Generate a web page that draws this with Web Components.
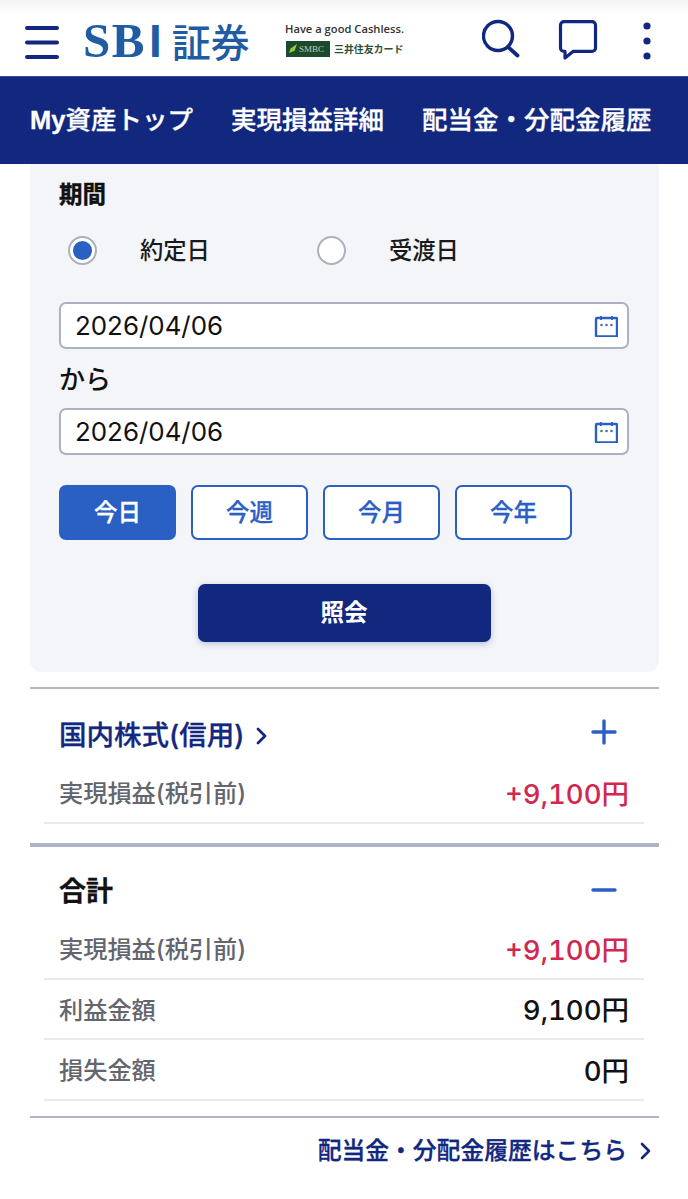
<!DOCTYPE html>
<html lang="ja">
<head>
<meta charset="utf-8">
<title>SBI証券</title>
<style>
  html, body { margin: 0; background: #fff; }
  body { font-family: Inter, "Noto Sans CJK JP", sans-serif; color: #111; }
  main { display: block; padding: 0 29px 0 30px; }
</style>
</head>
<body>
<app-header></app-header>
<app-tabs>
  <a><b>My</b>資産トップ</a>
  <a>実現損益詳細</a>
  <a>配当金・分配金履歴</a>
</app-tabs>
<main>
  <period-panel></period-panel>
  <pl-section heading="国内株式(信用)" link toggle="plus" style="border-top:2px solid #b3b6c0">
    <pl-row label="実現損益(税引前)" value="+9,100円" tone="up"></pl-row>
  </pl-section>
  <pl-section heading="合計" toggle="minus" style="border-top:4px solid #aeb4c4;margin-top:19px;padding-bottom:15px;border-bottom:2px solid #b3b6c0">
    <pl-row label="実現損益(税引前)" value="+9,100円" tone="up"></pl-row>
    <pl-row label="利益金額" value="9,100円"></pl-row>
    <pl-row label="損失金額" value="0円"></pl-row>
  </pl-section>
  <more-link>配当金・分配金履歴はこちら</more-link>
</main>

<script>
const FONT = 'Inter, "Noto Sans CJK JP", sans-serif';
const NAVY = "#12287f";
const BLUE = "#2a5fc4";

class AppHeader extends HTMLElement {
  constructor() {
    super();
    this.attachShadow({ mode: "open" });
    this.shadowRoot.innerHTML = `
      <style>
        :host { display: flex; align-items: center; height: 76px; box-sizing: border-box; padding-left: 25px; background: linear-gradient(#f4f4f5 0, #fff 14px); font-family: ${FONT}; }
        svg { display: block; flex: none; }
        .logo { margin-left: 24px; width: 176px; flex: none; display: flex; align-items: baseline; color: #1f5ca3; font: 700 49px/1 "Liberation Serif", "Noto Sans CJK JP", serif; letter-spacing: 1.500px; margin-top: 4px; }
        .logo i { font: 700 46px/1 "Liberation Sans", sans-serif; margin-left: 3px; letter-spacing: 0; }
        .logo b { font: 500 39px/1 "Noto Sans CJK JP", sans-serif; letter-spacing: 0; margin-left: 10px; }
        .card { margin: 3px 0 0 27px; width: 118px; flex: none; display: grid; gap: 6px; }
        .tag { font: 600 11.200px/13px "Open Sans", sans-serif; color: #333; white-space: nowrap; margin-left: -1px; }
        .brand { display: flex; align-items: center; gap: 4px; white-space: nowrap; }
        .smbc { width: 44px; height: 16px; background: #1d4a2c; color: #b9cdb9; font: 9px/16px "Liberation Serif", serif; box-sizing: border-box; padding-left: 13px; position: relative; }
        .smbc::before { content: ""; position: absolute; left: 3px; top: 3px; width: 8px; height: 9px; background: #9acb3c; clip-path: polygon(100% 0, 70% 75%, 0 100%, 20% 50%); }
        .jp { font: 700 10px/16px "Noto Sans CJK JP", sans-serif; color: #2c5138; letter-spacing: -0.100px; }
        .icons { margin: 4px 0 0 78px; display: flex; align-items: center; }
      </style>
      <svg width="34" height="34" viewBox="0 0 34 34" fill="none" stroke="${NAVY}" stroke-width="4" stroke-linecap="round" style="margin-top:8px"><path d="M2 3h30M2 17.500h30M2 32h30"/></svg>
      <div class="logo">SB<i>I</i><b>証券</b></div>
      <div class="card">
        <div class="tag">Have a good Cashless.</div>
        <div class="brand"><span class="smbc">SMBC</span><span class="jp">三井住友カード</span></div>
      </div>
      <div class="icons">
        <svg width="176" height="50" viewBox="0 0 176 50" fill="none" stroke="${NAVY}">
          <circle cx="16" cy="21" r="14.500" stroke-width="3.400"/>
          <path d="M26 32l9.500 8.500" stroke-width="3.800" stroke-linecap="round"/>
          <path d="M82 6.600h28a3.500 3.500 0 0 1 3.500 3.500v22.800a3.500 3.500 0 0 1-3.500 3.500H91l-8 6.600v-6.600h-1a3.500 3.500 0 0 1-3.500-3.500V10.100a3.500 3.500 0 0 1 3.500-3.500z" stroke-width="3.200" stroke-linejoin="round"/>
          <g fill="${NAVY}" stroke="none"><circle cx="165" cy="11" r="3.600"/><circle cx="165" cy="26" r="3.600"/><circle cx="165" cy="41" r="3.600"/></g>
        </svg>
      </div>
    `;
  }
}

class AppTabs extends HTMLElement {
  constructor() {
    super();
    this.attachShadow({ mode: "open" });
    this.shadowRoot.innerHTML = `
      <style>
        :host { display: flex; position: relative; overflow: hidden; height: 88px; box-sizing: border-box; border-top: 1px solid #3a4f96; align-items: center; gap: 38px; padding-left: 30px; background: ${NAVY}; color: #fff; white-space: nowrap; font: 500 25.500px/1 "Liberation Sans", "Noto Sans CJK JP", sans-serif; -webkit-text-stroke: .3px #fff; }
        :host::after { content: ""; position: absolute; top: 0; bottom: 0; right: 0; width: 50px; background: linear-gradient(90deg, rgba(18,40,127,0), rgba(18,40,127,.45)); }
        ::slotted(a) { display: block; flex: none; }
      </style>
      <slot></slot>
    `;
  }
}

class DateField extends HTMLElement {
  constructor() {
    super();
    this.attachShadow({ mode: "open" });
    this.shadowRoot.innerHTML = `
      <style>
        :host { display: flex; align-items: center; justify-content: space-between; height: 47px; box-sizing: border-box; padding: 0 9px 0 14px; border: 2px solid #aab1bf; border-radius: 7px; background: #fff; font: 400 25.900px/1 ${FONT}; color: #111; }
        svg { display: block; }
      </style>
      <span><slot></slot></span>
      <svg width="24" height="22" viewBox="0 0 24 22" fill="none" stroke="${BLUE}">
        <rect x="2" y="3" width="21" height="18.500" rx="1" stroke-width="2.400"/>
        <path d="M7 1v4M18 1v4" stroke-width="1.800"/>
        <g fill="#4a6fb5" stroke="none"><circle cx="7.500" cy="10" r="1.300"/><circle cx="12.500" cy="10" r="1.300"/><circle cx="17.500" cy="10" r="1.300"/></g>
      </svg>
    `;
  }
}

class RangeButton extends HTMLElement {
  constructor() {
    super();
    this.attachShadow({ mode: "open" });
    this.shadowRoot.innerHTML = `
      <style>
        :host { display: flex; align-items: center; justify-content: center; width: 117px; height: 55px; box-sizing: border-box; border: 2px solid ${BLUE}; border-radius: 7px; background: #fff; color: ${BLUE}; font: 500 23.500px/1 ${FONT}; -webkit-text-stroke: .3px currentColor; }
        :host([active]) { background: ${BLUE}; color: #fff; }
      </style>
      <slot></slot>
    `;
  }
}

class RadioOption extends HTMLElement {
  constructor() {
    super();
    this.attachShadow({ mode: "open" });
    this.shadowRoot.innerHTML = `
      <style>
        :host { display: flex; align-items: center; gap: 43px; font: 500 23.300px/1 ${FONT}; color: #1a1a1a; }
        .dot { width: 29px; height: 29px; box-sizing: border-box; border: 2px solid #aab1bf; border-radius: 50%; background: #fff; display: grid; place-items: center; }
        :host([checked]) .dot::after { content: ""; width: 19px; height: 19px; border-radius: 50%; background: ${BLUE}; }
      </style>
      <span class="dot"></span><slot></slot>
    `;
  }
}

class PeriodPanel extends HTMLElement {
  constructor() {
    super();
    this.attachShadow({ mode: "open" });
    this.shadowRoot.innerHTML = `
      <style>
        :host { display: block; box-sizing: border-box; height: 508px; margin-bottom: 15px; padding: 15px 30px 0 29px; border-radius: 0 0 12px 12px; background: #f3f5f8; font-family: ${FONT}; }
        h2 { margin: 0; font: 700 23.500px/32px ${FONT}; color: #111; -webkit-text-stroke: .4px #111; }
        .radios { display: flex; height: 29px; margin: 25px 0 37px 9px; }
        .radios radio-option:first-child { width: 249px; }
        .to { font: 500 26px/61px ${FONT}; color: #111; height: 59px; }
        .ranges { display: flex; gap: 15px; margin-top: 30px; }
        .submit { display: flex; align-items: center; justify-content: center; width: 293px; height: 58px; margin: 44px auto 0; border-radius: 7px; background: ${NAVY}; color: #fff; font: 700 23.500px/1 ${FONT}; box-shadow: 0 2px 6px rgba(18,40,127,.25); }
      </style>
      <h2>期間</h2>
      <div class="radios">
        <radio-option checked>約定日</radio-option>
        <radio-option>受渡日</radio-option>
      </div>
      <date-field>2026/04/06</date-field>
      <div class="to">から</div>
      <date-field>2026/04/06</date-field>
      <div class="ranges">
        <range-button active>今日</range-button>
        <range-button>今週</range-button>
        <range-button>今月</range-button>
        <range-button>今年</range-button>
      </div>
      <div class="submit">照会</div>
    `;
  }
}

class PlSection extends HTMLElement {
  constructor() {
    super();
    this.attachShadow({ mode: "open" });
    const link = this.hasAttribute("link");
    const minus = this.getAttribute("toggle") === "minus";
    this.shadowRoot.innerHTML = `
      <style>
        :host { display: block; font-family: ${FONT}; }
        .head { display: flex; align-items: center; justify-content: space-between; box-sizing: border-box; height: ${link ? 74 : 72.5}px; padding: ${link ? 19 : 18}px 42px 0 29px; }
        h3 { margin: 0; display: flex; align-items: center; gap: 12px; font: ${link ? 500 : 700} ${link ? 27.500 : 27}px/1 ${FONT}; color: ${link ? NAVY : "#111"}; -webkit-text-stroke: .3px currentColor; }
        .toggle { margin-top: ${link ? -8 : -4}px; }
        svg { display: block; }
        .rows { padding: 0 15px 0 14px; }
      </style>
      <div class="head">
        <h3>${this.getAttribute("heading")}${link ? `<svg width="11" height="18" viewBox="0 0 11 18" fill="none" stroke="${NAVY}" stroke-width="2.800" stroke-linecap="round" stroke-linejoin="round"><path d="M2 2l7 7-7 7"/></svg>` : ""}</h3>
        <svg class="toggle" width="26" height="26" viewBox="0 0 26 26" fill="none" stroke="${BLUE}" stroke-width="3.400" stroke-linecap="round"><path d="M2 13h22${minus ? "" : "M13 2v22"}"/></svg>
      </div>
      <div class="rows"><slot></slot></div>
    `;
  }
}

class PlRow extends HTMLElement {
  constructor() {
    super();
    this.attachShadow({ mode: "open" });
    const up = this.getAttribute("tone") === "up";
    this.shadowRoot.innerHTML = `
      <style>
        :host { display: flex; align-items: center; justify-content: space-between; height: 60.500px; box-sizing: border-box; padding: 4px 15px 0; border-bottom: 2px solid #e8e9ee; font-family: ${FONT}; }
        .l { font: 500 24.200px/1 ${FONT}; color: #63666e; }
        .v { font: 500 27.500px/1 ${FONT}; font-variant-numeric: tabular-nums; color: ${up ? "#d0284f" : "#111"}; }
      </style>
      <span class="l">${this.getAttribute("label")}</span>
      <span class="v">${this.getAttribute("value")}</span>
    `;
  }
}

class MoreLink extends HTMLElement {
  constructor() {
    super();
    this.attachShadow({ mode: "open" });
    this.shadowRoot.innerHTML = `
      <style>
        :host { display: flex; align-items: center; justify-content: flex-end; gap: 13px; height: 66px; padding-right: 8px; font: 500 23.800px/1 ${FONT}; color: ${NAVY}; -webkit-text-stroke: .3px ${NAVY}; }
        svg { display: block; }
      </style>
      <slot></slot>
      <svg width="11" height="18" viewBox="0 0 11 18" fill="none" stroke="${NAVY}" stroke-width="2.600" stroke-linecap="round" stroke-linejoin="round"><path d="M2 2l7 7-7 7"/></svg>
    `;
  }
}

customElements.define("app-header", AppHeader);
customElements.define("app-tabs", AppTabs);
customElements.define("date-field", DateField);
customElements.define("range-button", RangeButton);
customElements.define("radio-option", RadioOption);
customElements.define("period-panel", PeriodPanel);
customElements.define("pl-section", PlSection);
customElements.define("pl-row", PlRow);
customElements.define("more-link", MoreLink);
</script>
</body>
</html>
